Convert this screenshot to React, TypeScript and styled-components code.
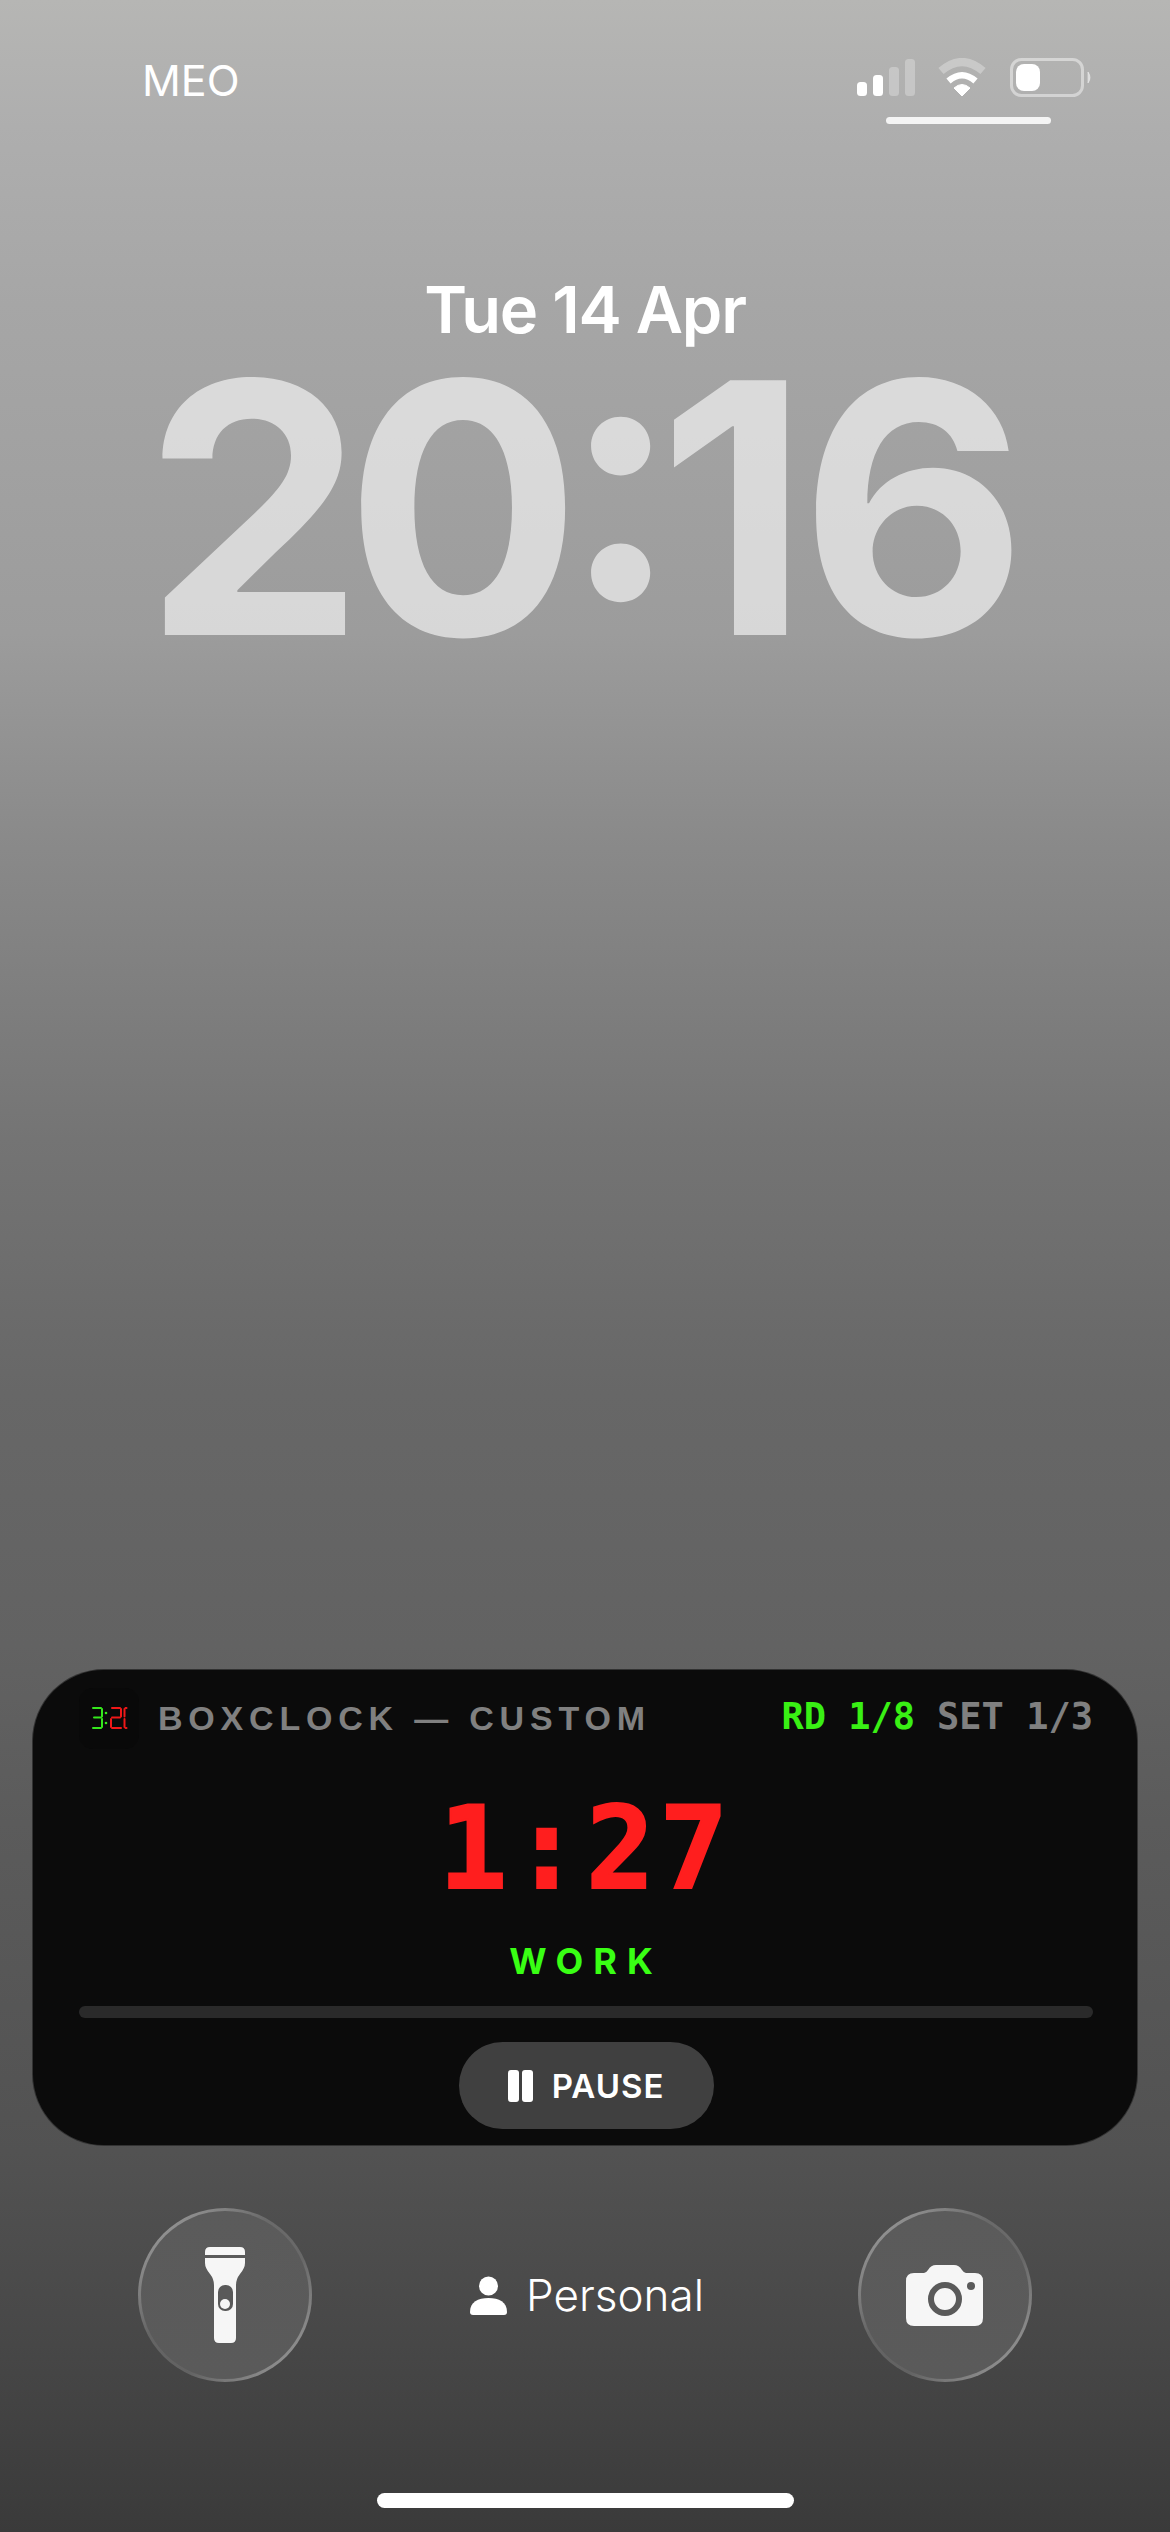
import React from "react";
import styled, { createGlobalStyle } from "styled-components";

const Global = createGlobalStyle`
  html, body { margin: 0; padding: 0; background: #3a3a3a; }
`;

const Screen = styled.div`
  width: 1170px;
  height: 2532px;
  display: flex;
  flex-direction: column;
  overflow: hidden;
  font-family: Inter, "Liberation Sans", sans-serif;
  color: #fff;
  background: linear-gradient(
    180deg,
    #b6b6b4 0%,
    #aeaeae 5%,
    #a6a6a6 12%,
    #9c9c9c 25%,
    #8a8a8a 33%,
    #747474 45%,
    #676767 55%,
    #626262 65%,
    #5b5b5b 72%,
    #525252 85%,
    #484848 92%,
    #3a3a3a 100%
  );
`;

const StatusBar = styled.div`
  display: flex;
  justify-content: space-between;
  align-items: flex-start;
  padding: 58px 78px 0 142px;
`;

const Carrier = styled.div`
  font-size: 43px;
  line-height: 48px;
  margin-top: -2px;
  font-weight: 400;
`;

const StatusRight = styled.div`
  width: 235px;
  display: flex;
  flex-direction: column;
`;

const StatusIcons = styled.svg`
  display: block;
`;

const FocusBar = styled.div`
  width: 165px;
  height: 7px;
  margin: 20px 0 0 29px;
  border-radius: 4px;
  background: #f4f4f4;
`;

const ClockBlock = styled.div`
  display: flex;
  flex-direction: column;
  align-items: center;
  margin-top: 148px;
`;

const DateLine = styled.div`
  font-size: 65px;
  line-height: 76px;
  font-weight: 600;
  letter-spacing: -1.2px;
`;

const Clock = styled.div`
  margin: 10px 8px 0 0;
  font-size: 350px;
  line-height: 300px;
  font-weight: 650;
  letter-spacing: -9px;
  color: rgba(255, 255, 255, 0.6);
  white-space: nowrap;
`;

const ClockLead = styled.span`
  margin-right: -10px;
`;

const ClockColon = styled.span`
  display: inline-block;
  margin: 0 -12px 0 -10px;
  transform: translateY(-36px);
`;

const Spacer = styled.div`
  flex: 1;
`;

const Widget = styled.section`
  box-sizing: border-box;
  width: 1106px;
  height: 477px;
  margin: 0 32px;
  padding: 18px 44px 0 46px;
  border-radius: 72px;
  background: #0b0b0b;
  border: 1.5px solid rgba(255, 255, 255, 0.16);
  display: flex;
  flex-direction: column;
`;

const WidgetHeader = styled.div`
  display: flex;
  align-items: center;
`;

const AppIcon = styled.div`
  width: 60px;
  height: 61px;
  border-radius: 14px;
  background: #090909;
  flex: none;
`;

const AppTitle = styled.div`
  margin-left: 19px;
  font-family: "Liberation Sans", Arial, sans-serif;
  font-size: 34px;
  font-weight: 700;
  letter-spacing: 5.8px;
  color: #808080;
  white-space: nowrap;
`;

const Counters = styled.div`
  margin-left: auto;
  display: flex;
  gap: 22px;
  margin-top: -4px;
`;

const Counter = styled.span<{ $active?: boolean }>`
  font-family: "DejaVu Sans Mono", "Liberation Mono", monospace;
  font-size: 37px;
  white-space: nowrap;
  font-weight: 700;
  color: ${(p) => (p.$active ? "#39f014" : "#808080")};
`;

const Timer = styled.div`
  margin-top: 39px;
  text-align: center;
  font-family: "DejaVu Sans Mono", monospace;
  font-weight: 700;
  font-size: 114px;
  line-height: 122px;
  letter-spacing: 5px;
  color: #ff1e1e;
  -webkit-text-stroke: 2px #ff1e1e;
`;

const Phase = styled.div`
  margin-top: 29px;
  text-align: center;
  font-size: 36px;
  line-height: 44px;
  font-weight: 700;
  letter-spacing: 10px;
  color: #39ff14;
`;

const Progress = styled.div`
  margin-top: 23px;
  height: 12px;
  border-radius: 6px;
  background: #2a2a2a;
`;

const PauseButton = styled.button`
  align-self: center;
  margin-top: 24px;
  width: 255px;
  height: 87px;
  border: 0;
  border-radius: 44px;
  background: #404040;
  color: #fff;
  display: flex;
  align-items: center;
  justify-content: center;
  gap: 19px;
  font-family: Inter, sans-serif;
  font-size: 33px;
  font-weight: 600;
  letter-spacing: 1px;
`;

const PauseGlyph = styled.span`
  display: flex;
  gap: 3px;
`;

const PauseBar = styled.span`
  width: 11px;
  height: 32px;
  border-radius: 3px;
  background: #fff;
`;

const LockRow = styled.div`
  display: flex;
  align-items: center;
  justify-content: space-between;
  margin-top: 62px;
  padding: 0 138px;
`;

const RoundButton = styled.button`
  box-sizing: border-box;
  width: 174px;
  height: 174px;
  padding: 0;
  border-radius: 50%;
  border: 3px solid transparent;
  display: flex;
  align-items: center;
  justify-content: center;
  background:
    linear-gradient(#5b5b5b, #5a5a5a) padding-box,
    linear-gradient(
        135deg,
        rgba(255, 255, 255, 0.5),
        rgba(255, 255, 255, 0.16) 40%,
        rgba(255, 255, 255, 0.16) 62%,
        rgba(255, 255, 255, 0.52)
      )
      border-box;
`;

const Profile = styled.div`
  display: flex;
  align-items: center;
  gap: 19px;
  margin-left: 4px;
  font-size: 44px;
  font-weight: 300;
  line-height: 52px;
`;

const HomeBar = styled.div`
  align-self: center;
  width: 417px;
  height: 15px;
  margin: 111px 0 24px;
  border-radius: 8px;
  background: #fff;
`;

const SegLine = styled.line<{ $c: string }>`
  stroke: ${(p) => p.$c};
  stroke-width: 2;
  stroke-linecap: round;
`;

const SegDot = styled.circle<{ $c: string }>`
  fill: ${(p) => p.$c};
`;

const G = "#35e81c";
const R = "#f01818";

export default function App() {
  return (
    <Screen>
      <Global />
      <StatusBar>
        <Carrier>MEO</Carrier>
        <StatusRight>
          <StatusIcons width="235" height="39" viewBox="0 0 235 39">
            <rect x="0" y="24" width="10" height="14" rx="3.5" fill="#fff" />
            <rect x="16" y="17" width="10" height="21" rx="3.5" fill="#fff" />
            <rect x="32" y="9" width="10" height="29" rx="3.5" fill="rgba(255,255,255,.28)" />
            <rect x="48" y="1" width="10" height="37" rx="3.5" fill="rgba(255,255,255,.28)" />
            <path d="M84 13Q105 -5 126 13" fill="none" stroke="rgba(255,255,255,.3)" strokeWidth="8" />
            <path d="M91.5 23Q105 11.5 118.5 23" fill="none" stroke="#fff" strokeWidth="6.5" />
            <path d="M105 38L97 30Q105 23 113 30Z" fill="#fff" stroke="#fff" strokeWidth="1" strokeLinejoin="round" />
            <rect x="154.5" y="1.5" width="71" height="36" rx="10" fill="none" stroke="rgba(255,255,255,.45)" strokeWidth="3" />
            <rect x="159" y="6" width="24" height="27" rx="8" fill="#fff" />
            <path d="M231 14Q235 19.5 231 25Z" fill="rgba(255,255,255,.45)" stroke="rgba(255,255,255,.45)" strokeWidth="1" />
          </StatusIcons>
          <FocusBar />
        </StatusRight>
      </StatusBar>

      <ClockBlock>
        <DateLine>Tue 14 Apr</DateLine>
        <Clock>
          <ClockLead>2</ClockLead>0<ClockColon>:</ClockColon>16
        </Clock>
      </ClockBlock>

      <Spacer />

      <Widget>
        <WidgetHeader>
          <AppIcon>
            <svg width="60" height="61" viewBox="0 0 60 61">
              <SegLine $c={G} x1="14" y1="20" x2="22" y2="20" />
              <SegLine $c={G} x1="15" y1="29.5" x2="22" y2="29.5" />
              <SegLine $c={G} x1="14" y1="40" x2="22" y2="40" />
              <SegLine $c={G} x1="23" y1="21" x2="23" y2="28.5" />
              <SegLine $c={G} x1="23" y1="31" x2="23" y2="39" />
              <SegDot $c={G} cx="27" cy="25" r="1.3" />
              <SegDot $c={G} cx="27" cy="35" r="1.3" />
              <SegLine $c={R} x1="33" y1="20" x2="41" y2="20" />
              <SegLine $c={R} x1="33" y1="29.5" x2="41" y2="29.5" />
              <SegLine $c={R} x1="33" y1="40" x2="42" y2="40" />
              <SegLine $c={R} x1="42" y1="21" x2="42" y2="28.5" />
              <SegLine $c={R} x1="32" y1="31" x2="32" y2="39" />
              <SegLine $c={R} x1="46.5" y1="20" x2="47.5" y2="20" />
              <SegLine $c={R} x1="45.5" y1="21" x2="45.5" y2="28.5" />
              <SegLine $c={R} x1="45.5" y1="31" x2="45.5" y2="39" />
              <SegLine $c={R} x1="46.5" y1="40" x2="47.5" y2="40" />
            </svg>
          </AppIcon>
          <AppTitle>BOXCLOCK — CUSTOM</AppTitle>
          <Counters>
            <Counter $active>RD 1/8</Counter>
            <Counter>SET 1/3</Counter>
          </Counters>
        </WidgetHeader>
        <Timer>1:27</Timer>
        <Phase>WORK</Phase>
        <Progress />
        <PauseButton>
          <PauseGlyph>
            <PauseBar />
            <PauseBar />
          </PauseGlyph>
          PAUSE
        </PauseButton>
      </Widget>

      <LockRow>
        <RoundButton aria-label="Torch">
          <svg width="70" height="120" viewBox="0 0 70 120">
            <path
              d="M15 20V17Q15 12 20 12H50Q55 12 55 17V20Z"
              fill="#f6f6f6"
            />
            <path
              d="M15 23H55V28Q55 33 50 39Q46 44 46 50V103Q46 108 41 108H29Q24 108 24 103V50Q24 44 20 39Q15 33 15 28Z"
              fill="#f6f6f6"
            />
            <rect x="28" y="50" width="15" height="26" rx="7" fill="#595959" />
            <circle cx="35" cy="69" r="5" fill="#f6f6f6" />
          </svg>
        </RoundButton>
        <Profile>
          <svg width="37" height="39" viewBox="0 0 37 39">
            <circle cx="18.5" cy="10" r="9.5" fill="#fff" />
            <path d="M0 36C0 26 8 22 18.5 22C29 22 37 26 37 36Q37 39 34 39H3Q0 39 0 36Z" fill="#fff" />
          </svg>
          Personal
        </Profile>
        <RoundButton aria-label="Camera">
          <svg width="77" height="61" viewBox="0 0 77 61">
            <path
              d="M8 8H18Q20 8 22 5Q25 0 30 0H48Q53 0 56 5Q58 8 60 8H69Q77 8 77 16V53Q77 61 69 61H8Q0 61 0 53V16Q0 8 8 8Z"
              fill="#f6f6f6"
            />
            <circle cx="39" cy="34" r="14" fill="none" stroke="#5a5a5a" strokeWidth="6" />
            <circle cx="65" cy="21" r="4" fill="#5a5a5a" />
          </svg>
        </RoundButton>
      </LockRow>

      <HomeBar />
    </Screen>
  );
}
